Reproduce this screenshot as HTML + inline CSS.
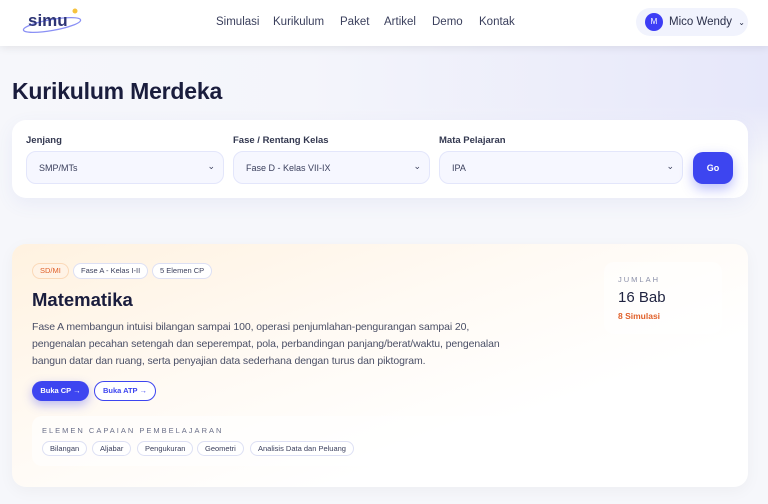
<!DOCTYPE html>
<html><head><meta charset="utf-8"><style>
*{margin:0;padding:0;box-sizing:border-box}
body{width:768px;height:504px;overflow:hidden;font-family:"Liberation Sans",sans-serif;background:#f6f7fb;position:relative;color:#1f2340}
.nav{position:absolute;left:0;top:0;width:768px;height:46px;background:#fff;box-shadow:0 2px 8px rgba(0,0,0,.08);z-index:2}
.logo{position:absolute;left:20px;top:6px}
.links{position:absolute;top:16px;left:216px;font-size:11.5px;color:#3a3f5c}
.links span{position:absolute;white-space:nowrap}
.user{position:absolute;left:636px;top:8px;width:112px;height:28px;border-radius:14px;background:#f1f3fd}
.av{position:absolute;left:9px;top:5px;width:18px;height:18px;border-radius:50%;background:#3d3df5;color:#fff;font-size:8px;text-align:center;line-height:18px}
.un{position:absolute;left:33px;top:8px;font-size:11.5px;color:#2a2f4a;white-space:nowrap}
.hero{position:absolute;left:0;top:46px;width:768px;height:120px;background:linear-gradient(90deg,#f6f7fb 0%,#f4f5fb 40%,#e6e7fa 100%)}
.hero:after{content:"";position:absolute;left:0;right:0;bottom:0;height:60px;background:linear-gradient(180deg,rgba(246,247,251,0),#f6f7fb)}
h1{position:absolute;left:12px;top:78px;font-size:23px;font-weight:bold;color:#1a1d3d;letter-spacing:-.2px}
.filt{position:absolute;left:12px;top:120px;width:736px;height:78px;background:#fff;border-radius:14px;box-shadow:0 6px 18px rgba(90,100,200,.08)}
.lbl{position:absolute;top:15px;font-size:9.5px;font-weight:bold;color:#333850}
.sel{position:absolute;top:31px;height:33px;border:1px solid #e3e6fb;background:#f6f7ff;border-radius:10px;font-size:9px;color:#3a3f5c;padding:11px 12px}
.sel i{position:absolute;right:8px;top:9px;font-style:normal;font-size:9px}
.go{position:absolute;left:681px;top:32px;width:40px;height:32px;border-radius:10px;background:#3d45f0;color:#fff;font-size:9px;font-weight:bold;text-align:center;line-height:32px;box-shadow:0 5px 12px rgba(61,69,240,.35)}
.card{position:absolute;left:12px;top:244px;width:736px;height:243px;border-radius:14px;background:linear-gradient(160deg,#fff2e0 0%,#fffaf4 40%,#fff 70%);box-shadow:0 4px 16px rgba(0,0,0,.04)}
.pill{position:absolute;top:19px;height:16px;border-radius:8px;font-size:7.5px;line-height:14px;padding:0 7px;background:#fff;border:1px solid #dde0f4;color:#3a3f5c}
h2{position:absolute;left:20px;top:45px;font-size:18.5px;font-weight:bold;color:#1a1d3d}
.desc{position:absolute;left:20px;top:75px;width:480px;font-size:10.5px;line-height:17px;color:#4a4f66;letter-spacing:-.1px}
.b1{position:absolute;left:20px;top:137px;width:57px;height:20px;border-radius:10px;background:#3d45f0;color:#fff;font-size:7.5px;font-weight:bold;line-height:20px;text-align:center;box-shadow:0 4px 10px rgba(61,69,240,.35)}
.b2{position:absolute;left:82px;top:137px;width:62px;height:20px;border-radius:10px;border:1px solid #3d45f0;color:#3d45f0;background:#fff;font-size:7.5px;font-weight:bold;line-height:18px;text-align:center}
.el{position:absolute;left:20px;top:172px;width:697px;height:50px;border-radius:10px;background:rgba(255,255,255,.6)}
.elt{position:absolute;left:10px;top:10px;font-size:7.5px;letter-spacing:2px;color:#6a6f88}
.ep{position:absolute;top:25px;height:15px;border-radius:8px;border:1px solid #dde0f4;background:#fff;font-size:7.5px;line-height:13px;padding:0 7px;color:#3a3f5c}
.stat{position:absolute;left:592px;top:18px;width:118px;height:72px;border-radius:10px;background:rgba(255,255,255,.5)}
</style></head><body>
<div class="nav">
 <svg class="logo" width="66" height="30" viewBox="0 0 66 30"><ellipse cx="32" cy="19" rx="29" ry="5.5" fill="none" stroke="#8a90f5" stroke-width="1.3" transform="rotate(-10 32 19)"/><text x="8" y="20" font-family="Liberation Sans" font-weight="bold" font-size="17" fill="#2e3575">simu</text><circle cx="55" cy="5" r="2.5" fill="#f6c23e"/></svg>
 <div class="links"><span style="left:0">Simulasi</span><span style="left:57px">Kurikulum</span><span style="left:124px">Paket</span><span style="left:168px">Artikel</span><span style="left:216px">Demo</span><span style="left:263px">Kontak</span></div>
 <div class="user"><div class="av">M</div><div class="un">Mico Wendy <span style="font-size:8px;margin-left:3px">⌄</span></div></div>
</div>
<div class="hero"></div>
<h1>Kurikulum Merdeka</h1>
<div class="filt">
 <div class="lbl" style="left:14px">Jenjang</div><div class="sel" style="left:14px;width:198px">SMP/MTs<i>⌄</i></div>
 <div class="lbl" style="left:221px">Fase / Rentang Kelas</div><div class="sel" style="left:221px;width:197px">Fase D - Kelas VII-IX<i>⌄</i></div>
 <div class="lbl" style="left:427px">Mata Pelajaran</div><div class="sel" style="left:427px;width:244px">IPA<i>⌄</i></div>
 <div class="go">Go</div>
</div>
<div class="card">
 <div class="pill" style="left:20px;background:#fff3e6;border-color:#fbd9b8;color:#e0602a">SD/MI</div>
 <div class="pill" style="left:61px">Fase A - Kelas I-II</div>
 <div class="pill" style="left:140px">5 Elemen CP</div>
 <h2>Matematika</h2>
 <div class="desc">Fase A membangun intuisi bilangan sampai 100, operasi penjumlahan-pengurangan sampai 20, pengenalan pecahan setengah dan seperempat, pola, perbandingan panjang/berat/waktu, pengenalan bangun datar dan ruang, serta penyajian data sederhana dengan turus dan piktogram.</div>
 <div class="b1">Buka CP →</div><div class="b2">Buka ATP →</div>
 <div class="stat"><div style="position:absolute;left:14px;top:13px;font-size:7.5px;letter-spacing:2px;color:#8a8fa8">JUMLAH</div><div style="position:absolute;left:14px;top:27px;font-size:15px;color:#1f2340">16 Bab</div><div style="position:absolute;left:14px;top:49px;font-size:8.5px;font-weight:bold;color:#e0602a">8 Simulasi</div></div>
 <div class="el"><div class="elt">ELEMEN CAPAIAN PEMBELAJARAN</div>
  <div class="ep" style="left:10px">Bilangan</div><div class="ep" style="left:60px">Aljabar</div><div class="ep" style="left:105px">Pengukuran</div><div class="ep" style="left:165px">Geometri</div><div class="ep" style="left:218px">Analisis Data dan Peluang</div></div>
</div>
</body></html>
